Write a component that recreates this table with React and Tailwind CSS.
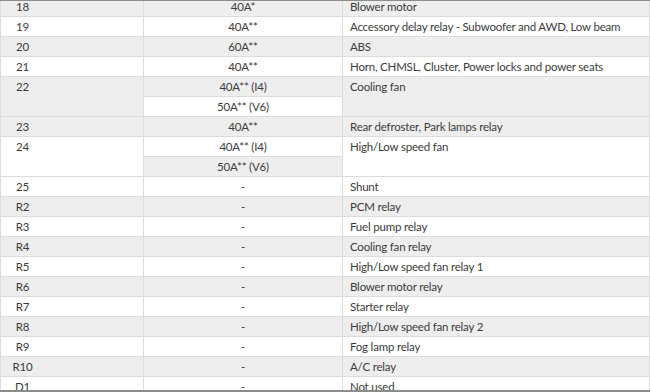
import React from "react";

const G = "bg-[#eeeeee]";
const W = "bg-white";

const rows = [
  { n: "18", a: ["40A*"], d: "Blower motor" },
  { n: "19", a: ["40A**"], d: "Accessory delay relay - Subwoofer and AWD, Low beam" },
  { n: "20", a: ["60A**"], d: "ABS" },
  { n: "21", a: ["40A**"], d: "Horn, CHMSL, Cluster, Power locks and power seats" },
  { n: "22", a: ["40A** (I4)", "50A** (V6)"], d: "Cooling fan" },
  { n: "23", a: ["40A**"], d: "Rear defroster, Park lamps relay" },
  { n: "24", a: ["40A** (I4)", "50A** (V6)"], d: "High/Low speed fan" },
  { n: "25", a: ["-"], d: "Shunt" },
  { n: "R2", a: ["-"], d: "PCM relay" },
  { n: "R3", a: ["-"], d: "Fuel pump relay" },
  { n: "R4", a: ["-"], d: "Cooling fan relay" },
  { n: "R5", a: ["-"], d: "High/Low speed fan relay 1" },
  { n: "R6", a: ["-"], d: "Blower motor relay" },
  { n: "R7", a: ["-"], d: "Starter relay" },
  { n: "R8", a: ["-"], d: "High/Low speed fan relay 2" },
  { n: "R9", a: ["-"], d: "Fog lamp relay" },
  { n: "R10", a: ["-"], d: "A/C relay" },
  { n: "D1", a: ["-"], d: "Not used" },
];

export default function App() {
  let tr = 0;
  const body = [];
  rows.forEach((r, i) => {
    r.a.forEach((amp, j) => {
      const bg = tr % 2 === 0 ? G : W;
      tr++;
      body.push(
        <tr key={i + "-" + j} className={bg + " h-[20px]"}>
          {j === 0 && (
            <td rowSpan={r.a.length} className="border border-[#dcdcdc] align-top p-0 w-[143px]">
              <div className="w-[43px] text-center leading-[19px]">{r.n}</div>
            </td>
          )}
          <td className="border border-[#dcdcdc] text-center p-0 leading-[19px] w-[199px] whitespace-nowrap">
            {amp}
          </td>
          {j === 0 && (
            <td rowSpan={r.a.length} className="border border-[#dcdcdc] align-top p-0 pl-[7px] leading-[19px] whitespace-nowrap">
              {r.d}
            </td>
          )}
        </tr>
      );
    });
  });

  return (
    <div className="w-[650px] h-[392px] overflow-hidden bg-white border-t border-b-2 border-[#8c8c8c] text-[11.5px] tracking-[-0.2px] text-[#3c3c3c] font-['Lato',sans-serif]">
      <table className="w-full border-collapse table-fixed -mt-[5px]">
        <colgroup>
          <col className="w-[143px]" />
          <col className="w-[199px]" />
          <col />
        </colgroup>
        <tbody>{body}</tbody>
      </table>
    </div>
  );
}
